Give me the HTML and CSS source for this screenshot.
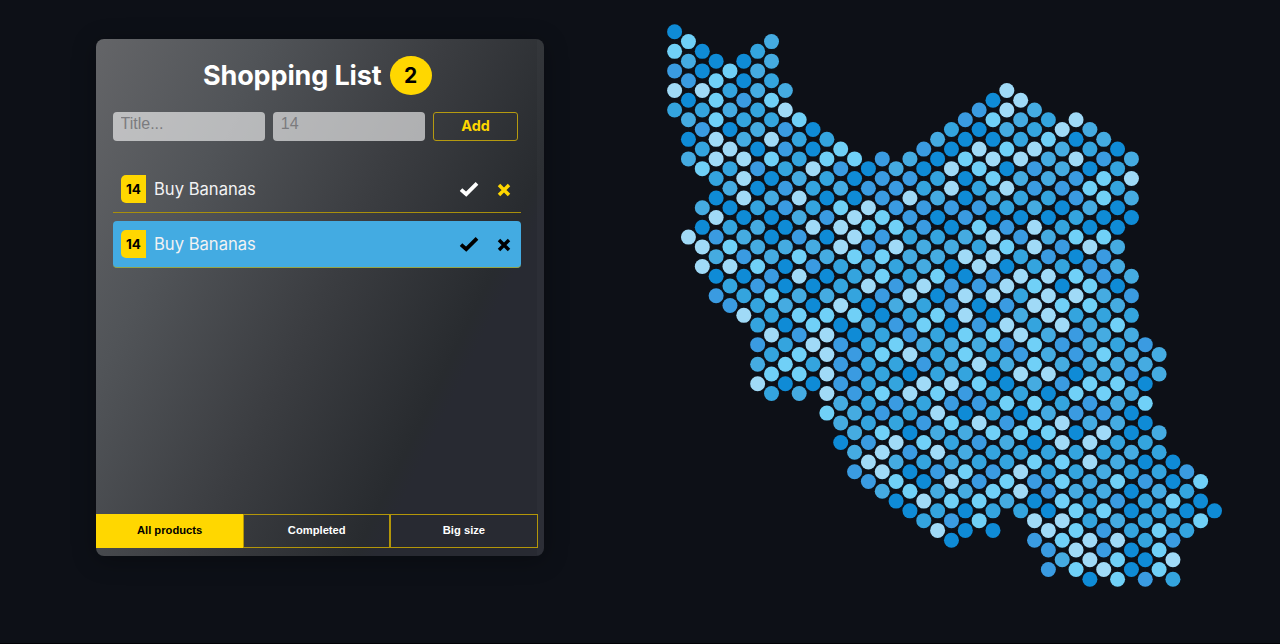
FILE: index.html
```html
<!DOCTYPE html>
<html lang="en">
<head>
<meta charset="utf-8">
<title>Shopping List</title>
<link rel="stylesheet" href="styles.css">
</head>
<body>
<main class="page">
  <section class="card">
    <header class="head"><h1 class="title">Shopping List</h1><span class="count">2</span></header>
    <form class="form">
      <input class="field" type="text" placeholder="Title...">
      <input class="field" type="text" placeholder="14">
      <button class="add" type="button">Add</button>
    </form>
    <ul class="list">
      <li class="item">
        <span class="size">14</span><span class="name">Buy Bananas</span>
        <svg class="check" viewBox="0 0 20 16"><path d="M2 8.6 7.2 13.2 18 2.4"/></svg>
        <svg class="cross" viewBox="0 0 14 14"><path d="M2 2 12 12M12 2 2 12"/></svg>
      </li>
      <li class="item done">
        <span class="size">14</span><span class="name">Buy Bananas</span>
        <svg class="check" viewBox="0 0 20 16"><path d="M2 8.6 7.2 13.2 18 2.4"/></svg>
        <svg class="cross" viewBox="0 0 14 14"><path d="M2 2 12 12M12 2 2 12"/></svg>
      </li>
    </ul>
    <nav class="tabs">
      <button class="tab active" type="button">All products</button>
      <button class="tab" type="button">Completed</button>
      <button class="tab" type="button">Big size</button>
    </nav>
  </section>
  <svg class="map" id="map" viewBox="660 0 620 644"></svg>
</main>
<script src="map.js"></script>
</body>
</html>
```

FILE: styles.css
```css
* { box-sizing: border-box; }
body { margin: 0; background: #0d1017; font-family: Inter, "Liberation Sans", sans-serif; color: #fff; overflow: hidden; }
.page { display: flex; height: 644px; padding-left: 96px; border-bottom: 1px solid #020306; }
.card {
  display: flex; flex-direction: column; flex: none;
  width: 448px; height: 517px; margin: 39px 116px 0 0; padding: 17px 6.5px 8px 0;
  border-radius: 8px; overflow: hidden;
  background:
    linear-gradient(rgba(255,255,255,.018), rgba(255,255,255,.018)) right / 7px 100% no-repeat,
    linear-gradient(116deg, #646568 0%, #515458 24%, #3b3d41 50%, #282b2f 73%, #282a32 76%, #282a32 100%);
  box-shadow: 0 4px 24px rgba(0,0,0,.3);
}
.head { display: flex; justify-content: center; align-items: center; gap: 8px; height: 39px; padding-left: 1px; }
.title { margin: 0; font-size: 27px; line-height: 40px; font-weight: 700; letter-spacing: -.13px; }
.count { width: 42px; height: 39px; border-radius: 50%; background: #ffd700; color: #000; font-size: 21px; font-weight: 700; line-height: 39px; text-align: center; }
.form { display: flex; gap: 8px; margin: 16px 0 0 16.5px; height: 30px; align-items: center; }
.field { width: 152.3px; height: 29px; margin: 0; border: 0; border-radius: 4px; padding: 0 8px 4px; background: rgba(255,255,255,.6); font: 16px "Liberation Sans", Arial, sans-serif; }
.field::placeholder { color: #7b7b7e; opacity: 1; }
.add { width: 85px; height: 29px; padding: 0 0 1px; border: 1px solid #b59a10; border-radius: 3px; background: transparent; color: #ffd700; font: 700 14.4px Inter, sans-serif; }
.list { list-style: none; margin: 25px 16.5px 0 16.5px; padding: 0; display: flex; flex-direction: column; gap: 8px; }
.item { display: flex; align-items: center; height: 47px; padding: 0 10px 0 8.5px; border-bottom: 1px solid #a88f0c; }
.done { background: #43abe2; border-radius: 4px; border-bottom-color: #93a448; }
.size { width: 25px; height: 28px; line-height: 28px; border-radius: 5px 0 0 5px; background: #ffd700; color: #000; font-size: 13.5px; font-weight: 700; text-align: center; }
.name { flex: 1; padding-left: 8px; font-size: 16.6px; color: #f2f2f3; }
.check, .cross { fill: none; stroke: #fff; stroke-width: 3.8; }
.check { width: 20px; height: 16px; margin-right: 18.5px; }
.cross { width: 14px; height: 14px; margin-top: 2px; stroke: #ffd700; stroke-width: 3.5; }
.done .check, .done .cross { stroke: #000; }
.tabs { display: flex; margin-top: auto; height: 34px; }
.tab { flex: 1; margin: 0; padding: 0 0 2px; border: 1px solid #b39609; background: transparent; color: #fff; font: 700 11.2px "Liberation Sans", Arial, sans-serif; }
.active { background: #ffd700; border-color: #ffd700; color: #000; }
.map { flex: none; width: 620px; height: 644px; }
.dot-D { fill: #0f8bd6; }
.dot-L { fill: #70d0f7; }
.dot-P { fill: #a0daf7; }
.dot-M { fill: #34a4de; }
.dot-B { fill: #3a9be1; }
.dot-S { fill: #45abe1; }
```

FILE: map.js
```js
// One entry per column: "first row:colours", a space starts a new run of dots.
const columns = [
  "0:DLBPM",
  "1:LSBDSDS 21:P",
  "2:DDPMBML 18:SDPP",
  "3:DLLLPPMDPBSDB",
  "4:LMSDPMSDMLPMB",
  "3:DDBMSPPPDSBDMP",
  "2:MSSMSDBDMSSLBMMBSP",
  "1:SSMLMPLDSDDSBLMPMLM",
  "6:SPBBMBBDSDDSDMLD",
  "9:LMMSPSBLPSLBLLS",
  "10:DDPMMPSBDDLPMD",
  "11:MLMDBDSDSLPPPPL",
  "12:LBSLPPMMPDBBBSSD",
  "13:LDDPPLMMLDBBBSSSB",
  "14:DBPLBSPDSMMMMMBPB",
  "13:BBBLBLLBDMLMLBLPPS",
  "14:SBBLPMBSBLMMBMPSLD",
  "13:SBPBMSMPMBPDPMDBDLD",
  "12:BDMBBSSPMLSBPMBLMDPM",
  "11:SDMSDMSLDLMMMLPSPBSMP",
  "10:MDPPBDSDBBDSSPBLMSPLBD",
  "9:BDLDDBSPDPPLLMBDSSLSDD",
  "8:BDPLMBLMPBDBSPLBPBMBLL",
  "7:DLDPLSDPPBPDLMDMMLMBLMD",
  "6:PPSLDPMBLDPBPBSDLBSMLS",
  "7:PSMPSMDBMPMSPBPMDLMPPM",
  "8:SMPBBSPPMLPMLLSLLDLBDPB",
  "9:MLSSMDSBPPPSSPDSLMMBDPBB",
  "10:PSSBDMBMDLPBSBMPPLLLPLS",
  "9:PDPBBMLDLPMBBDLBDMMSLLPL",
  "10:SMDLSDPBLLSSSLBSPPSMMPPD",
  "11:SBLLDLBBSMSLSLBPMSSLBBP",
  "12:DMMDDSSDSLMSLSSMSLBSPLL",
  "13:SPSD 25:SBMSSBSDDSMDDMDD",
  "32:BSDLDMDBMMMDB",
  "33:SS 41:SMMSMLLL",
  "44:DDLMBPM",
  "45:BMDM",
  "46:LDL",
  "49:D"
];
const map = document.getElementById("map");
columns.forEach((column, c) => {
  column.split(" ").forEach(run => {
    const [start, colours] = run.split(":");
    [...colours].forEach((colour, i) => {
      const dot = document.createElementNS("http://www.w3.org/2000/svg", "circle");
      dot.setAttribute("class", "dot-" + colour);
      dot.setAttribute("cx", 674.6 + c * 13.843);
      dot.setAttribute("cy", 31.8 + (Number(start) + i * 2) * 9.777);
      dot.setAttribute("r", 7.5);
      map.appendChild(dot);
    });
  });
});
```
